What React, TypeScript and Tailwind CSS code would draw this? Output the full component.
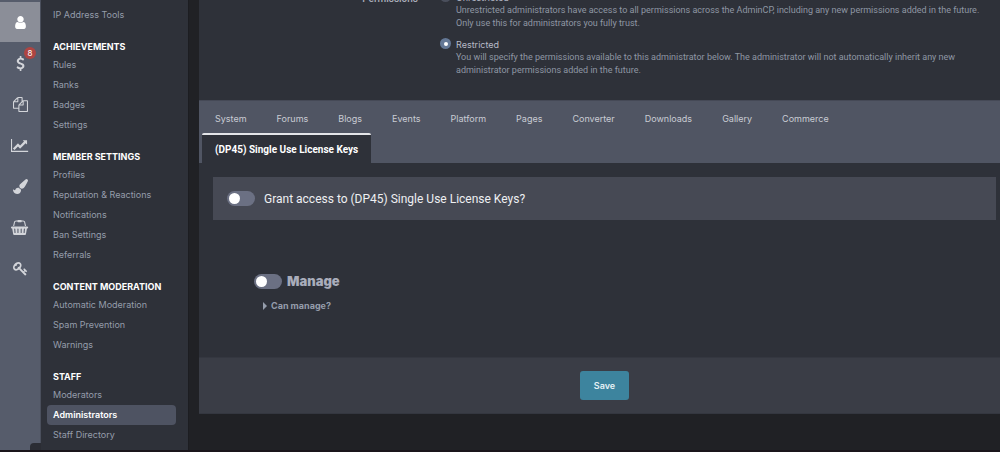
import React from 'react';

const icons = {
  user: {
    box: "0 0 1792 1792",
    d: "M1536 1399q0 109-62.5 187t-150.5 78h-854q-88 0-150.5-78t-62.5-187q0-85 8.5-160.5t31.5-152 58.5-131 94-89 134.5-34.5q131 128 313 128t313-128q76 0 134.5 34.5t94 89 58.5 131 31.5 152 8.5 160.5zm-256-887q0 159-112.5 271.5t-271.5 112.5-271.5-112.5-112.5-271.5 112.5-271.5 271.5-112.5 271.5 112.5 112.5 271.5z"
  },
  dollar: {
    box: "0 0 1792 1792",
    d: "M1362 1185q0 153-99.5 263.5t-258.5 136.5v175q0 14-9 23t-23 9h-135q-13 0-22.5-9.5t-9.5-22.5v-175q-66-9-127.5-31t-101.5-44.5-74-48-46.5-37.5-17.5-18q-17-21-2-41l103-135q7-10 23-12 15-2 24 9l2 2q113 99 243 125 37 8 74 8 81 0 142.5-43t61.5-122q0-28-15-53t-33.5-42-58.5-37.5-66-32-80-32.5q-39-16-61.5-25t-61.5-26.5-62.5-31-56.5-35.5-53.5-42.5-43.5-49-35.5-58-21-66.5-8.5-78q0-138 98-242t255-134v-180q0-13 9.5-22.5t22.5-9.5h135q14 0 23 9t9 23v176q57 6 110.5 23t87 33.5 63.5 37.5 39 29 15 14q17 18 5 38l-81 146q-8 15-23 16-14 3-27-7-3-3-14.5-12t-39-26.5-58.5-32-74.5-26-85.5-11.5q-95 0-155 43t-60 111q0 26 8.5 48t29.5 41.5 39.5 33 56 31 60.5 27 70 27.5q53 20 81 31.5t76 35 75.5 42.5 62 50 53 63.5 31.5 76.5 13 94z"
  },
  files: {
    box: "0 0 1792 1792",
    d: "M1696 384q40 0 68 28t28 68v1216q0 40-28 68t-68 28h-960q-40 0-68-28t-28-68v-288h-544q-40 0-68-28t-28-68v-672q0-40 20-88t48-76l408-408q28-28 76-48t88-20h416q40 0 68 28t28 68v328q68-40 128-40h416zm-544 213l-299 299h299v-299zm-640-384l-299 299h299v-299zm196 647l316-316v-416h-384v416q0 40-28 68t-68 28h-416v640h512v-256q0-40 20-88t48-76zm956 804v-1152h-384v416q0 40-28 68t-68 28h-416v640h896z"
  },
  chart: {
    box: "0 0 2048 1792",
    d: "M2048 1536v128h-2048v-1536h128v1408h1920zm-128-1248v435q0 21-19.5 29.5t-35.5-7.5l-121-121-633 633q-10 10-23 10t-23-10l-233-233-416 416-192-192 585-585q10-10 23-10t23 10l233 233 464-464-121-121q-16-16-7.5-35.5t29.5-19.5h435q14 0 23 9t9 23z"
  },
  brush: {
    box: "0 0 1792 1792",
    d: "M1615 0q70 0 122.5 46.5t52.5 116.5q0 63-45 151-332 629-465 752-97 91-218 91-126 0-216.5-92.5t-90.5-219.5q0-128 92-212l638-579q59-54 130-54zm-909 1034q39 76 106.5 130t150.5 76l1 71q4 213-129.5 347t-348.5 134q-123 0-218-46.5t-152.5-127.5-86.5-183-29-220q7 5 41 30t62 44.5 59 36.5 46 17q41 0 55-37 25-66 57.5-112.5t69.5-76 88-47.5 103-25.5 125-10.5z"
  },
  basket: {
    box: "0 0 2048 1792",
    d: "M1920 768q53 0 90.5 37.5t37.5 90.5-37.5 90.5-90.5 37.5h-15l-115 662q-8 46-44 76t-82 30h-1280q-46 0-82-30t-44-76l-115-662h-15q-53 0-90.5-37.5t-37.5-90.5 37.5-90.5 90.5-37.5h1792zm-1435 800q26-2 43.5-22.5t15.5-46.5l-32-416q-2-26-22.5-43.5t-46.5-15.5-43.5 22.5-15.5 46.5l32 416q2 25 20.5 42t43.5 17h5zm411-64v-416q0-26-19-45t-45-19-45 19-19 45v416q0 26 19 45t45 19 45-19 19-45zm384 0v-416q0-26-19-45t-45-19-45 19-19 45v416q0 26 19 45t45 19 45-19 19-45zm352 5l32-416q2-26-15.5-46.5t-43.5-22.5-46.5 15.5-22.5 43.5l-32 416q-2 26 15.5 46.5t43.5 22.5h5q25 0 43.5-17t20.5-42zm-1156-1217l-93 412h-132l101-441q19-88 89-143.5t160-55.5h167q0-26 19-45t45-19h384q26 0 45 19t19 45h167q90 0 160 55.5t89 143.5l101 441h-132l-93-412q-11-44-45.5-72t-79.5-28h-167q0 26-19 45t-45 19h-384q-26 0-45-19t-19-45h-167q-45 0-79.5 28t-45.5 72z"
  },
  key: {
    box: "0 0 1792 1792",
    d: "M832 512q0-80-56-136t-136-56-136 56-56 136q0 42 19 83-41-19-83-19-80 0-136 56t-56 136 56 136 136 56 136-56 56-136q0-42-19-83 41 19 83 19 80 0 136-56t56-136zm851 704q0 17-49 66t-66 49q-9 0-28.5-16t-36.5-33-38.5-40-24.5-26l-96 96 220 220q28 28 28 68 0 42-39 81t-81 39q-40 0-68-28l-671-671q-176 131-365 131-163 0-265.5-102.5t-102.5-265.5q0-160 95-313t248-248 313-95q163 0 265.5 102.5t102.5 265.5q0 189-131 365l355 355 96-96q-3-3-26-24.5t-40-38.5-33-36.5-16-28.5q0-17 49-66t66-49q13 0 23 10 6 6 46 44.5t82 79.5 86.5 86 73 78 28.5 41z"
  }
};

const railItems: { icon: keyof typeof icons; label: string; active?: boolean; badge?: number }[] = [
  { icon: "user", label: "Members", active: true },
  { icon: "dollar", label: "Commerce", badge: 8 },
  { icon: "files", label: "Pages" },
  { icon: "chart", label: "Statistics" },
  { icon: "brush", label: "Customization" },
  { icon: "basket", label: "Marketplace" },
  { icon: "key", label: "License keys" }
];

const menu = [
  { title: "", links: ["IP Address Tools"] },
  { title: "ACHIEVEMENTS", links: ["Rules", "Ranks", "Badges", "Settings"] },
  { title: "MEMBER SETTINGS", links: ["Profiles", "Reputation & Reactions", "Notifications", "Ban Settings", "Referrals"] },
  { title: "CONTENT MODERATION", links: ["Automatic Moderation", "Spam Prevention", "Warnings"] },
  { title: "STAFF", links: ["Moderators", "Administrators", "Staff Directory"] }
];

const tabs = [
  "System", "Forums", "Blogs", "Events", "Platform", "Pages", "Converter",
  "Downloads", "Gallery", "Commerce", "(DP45) Single Use License Keys"
];

const permissions = [
  {
    id: "unrestricted",
    title: "Unrestricted",
    text: "Unrestricted administrators have access to all permissions across the AdminCP, including any new permissions added in the future. Only use this for administrators you fully trust."
  },
  {
    id: "restricted",
    title: "Restricted",
    text: "You will specify the permissions available to this administrator below. The administrator will not automatically inherit any new administrator permissions added in the future."
  }
];

const Icon: React.FC<{ name: keyof typeof icons }> = ({ name }) => (
  <svg viewBox={icons[name].box} className="h-[15px] w-auto" fill="currentColor" aria-hidden="true">
    <path d={icons[name].d} />
  </svg>
);

const Toggle: React.FC<{ id: string }> = ({ id }) => (
  <input
    id={id}
    type="checkbox"
    role="switch"
    className="flex h-[15px] w-7 shrink-0 appearance-none items-center rounded-full bg-[#6b7083] px-[2px] before:size-[11px] before:rounded-full before:bg-white checked:justify-end"
  />
);

const Rail: React.FC = () => (
  <nav className="relative flex w-[41px] shrink-0 flex-col gap-px border-r border-[#4a4f5c] bg-[#565c6b] pt-[2px]">
    {railItems.map((item) => (
      <a
        key={item.icon}
        href="#"
        aria-label={item.label}
        className={`relative flex h-10 items-center justify-center ${item.active ? "bg-[#8b8e98] text-white" : "text-[#d3d5da]"}`}
      >
        <Icon name={item.icon} />
        {item.badge && (
          <span className="absolute top-1 right-1 size-3 rounded-full bg-[#ae4542] text-center text-[8px] leading-3 text-white">
            {item.badge}
          </span>
        )}
      </a>
    ))}
    <div className="absolute -right-px bottom-0 h-[7px] w-[11px] rounded-tl bg-[#2b2d34]" />
  </nav>
);

const Sidebar: React.FC = () => (
  <nav className="flex w-[148px] shrink-0 flex-col gap-[14px] border-r border-[#1c1d21] bg-[#2e3139] pt-[5px] pr-3 pl-[6px] text-[9px]">
    {menu.map((group) => (
      <div key={group.title}>
        {group.title && <h3 className="px-[6px] leading-4 font-bold text-white">{group.title}</h3>}
        <ul>
          {group.links.map((link) => (
            <li key={link}>
              <a
                href="#"
                className={`block rounded px-[6px] leading-5 ${link === "Administrators" ? "bg-[#4e5362] font-semibold text-white" : "text-[#959dab]"}`}
              >
                {link}
              </a>
            </li>
          ))}
        </ul>
      </div>
    ))}
  </nav>
);

export default function App() {
  return (
    <div className="flex h-screen flex-col overflow-hidden bg-[#202125] font-['Inter','Liberation_Sans',sans-serif]">
      <div className="flex min-h-0 flex-1">
        <Rail />
        <Sidebar />

        <main className="-mr-[10px] ml-[10px] min-w-0 flex-1">
          <form onSubmit={(e) => e.preventDefault()} className="bg-[#2e3139]">
            {/* Scrolled partly out of view */}
            <fieldset className="-mt-[9px] flex pr-[14px] pb-[23px]">
              <div className="w-[219px] shrink-0 text-right font-[Roboto,'Liberation_Sans',sans-serif] text-[10px] leading-4 font-medium text-[#a9adb9]">Permissions</div>
              <div className="ml-[22px] flex flex-col gap-2 text-[9px] leading-[13px]">
                {permissions.map((p) => (
                  <div key={p.id} className="flex items-start gap-[5px]">
                    <input
                      id={p.id}
                      type="radio"
                      name="permissions"
                      defaultChecked={p.id === "restricted"}
                      className="flex size-[11px] shrink-0 appearance-none items-center justify-center rounded-full bg-[#4a4f5c] checked:bg-[#647896] checked:before:size-1 checked:before:rounded-full checked:before:bg-white"
                    />
                    <div>
                      <label htmlFor={p.id} className="block text-[#b8bbc8]">{p.title}</label>
                      <p className="font-[Roboto,'Liberation_Sans',sans-serif] text-[#8e97a4]">{p.text}</p>
                    </div>
                  </div>
                ))}
              </div>
            </fieldset>

            <div role="tablist" className="flex flex-wrap gap-x-1 border-t border-[#454956] bg-[#505563] px-[3px] pt-[2px]">
              {tabs.map((tab, index) => (
                <button
                  key={tab}
                  type="button"
                  role="tab"
                  aria-selected={index === tabs.length - 1}
                  className={`h-[30px] border-t-2 px-[13px] ${index === tabs.length - 1 ? "rounded-t-xs border-[#e4e5e8] bg-[#2e3139] font-[Roboto,'Liberation_Sans',sans-serif] text-[10px] font-bold text-white" : "border-transparent text-[9px] text-[#c9ccd4]"}`}
                >
                  {tab}
                </button>
              ))}
            </div>

            <div className="px-[14px] pt-[14px] pb-[44px]">
              <div className="flex h-[43px] items-center gap-[9px] bg-[#464954] px-[14px]">
                <Toggle id="grant" />
                <label htmlFor="grant" className="font-[Roboto,'Liberation_Sans',sans-serif] text-[12px] text-[#eeeff2]">
                  Grant access to (DP45) Single Use License Keys?
                </label>
              </div>

              <div className="mt-[51px] ml-[41px]">
                <div className="flex items-center gap-[5px]">
                  <Toggle id="manage" />
                  <label htmlFor="manage" className="text-[13px] leading-5 font-black text-[#a9adbb]">Manage</label>
                </div>
                <button type="button" className="mt-2 ml-[9px] flex items-center gap-1 text-[9px] leading-[14px] font-bold text-[#959dab]">
                  <svg viewBox="0 0 4 8" className="h-2 w-1" fill="currentColor" aria-hidden="true">
                    <path d="M0 0l4 4-4 4z" />
                  </svg>
                  Can manage?
                </button>
              </div>
            </div>

            <div className="flex justify-center border-y border-[#343740] bg-[#3a3d46] py-[13px]">
              <button type="submit" className="h-[29px] rounded-[3px] bg-[#3d849e] px-[14px] text-[9px] font-semibold text-[#e6f1f5]">
                Save
              </button>
            </div>
          </form>
        </main>
      </div>
      <div className="h-[2px] shrink-0 bg-[#1a151b]" />
    </div>
  );
}
